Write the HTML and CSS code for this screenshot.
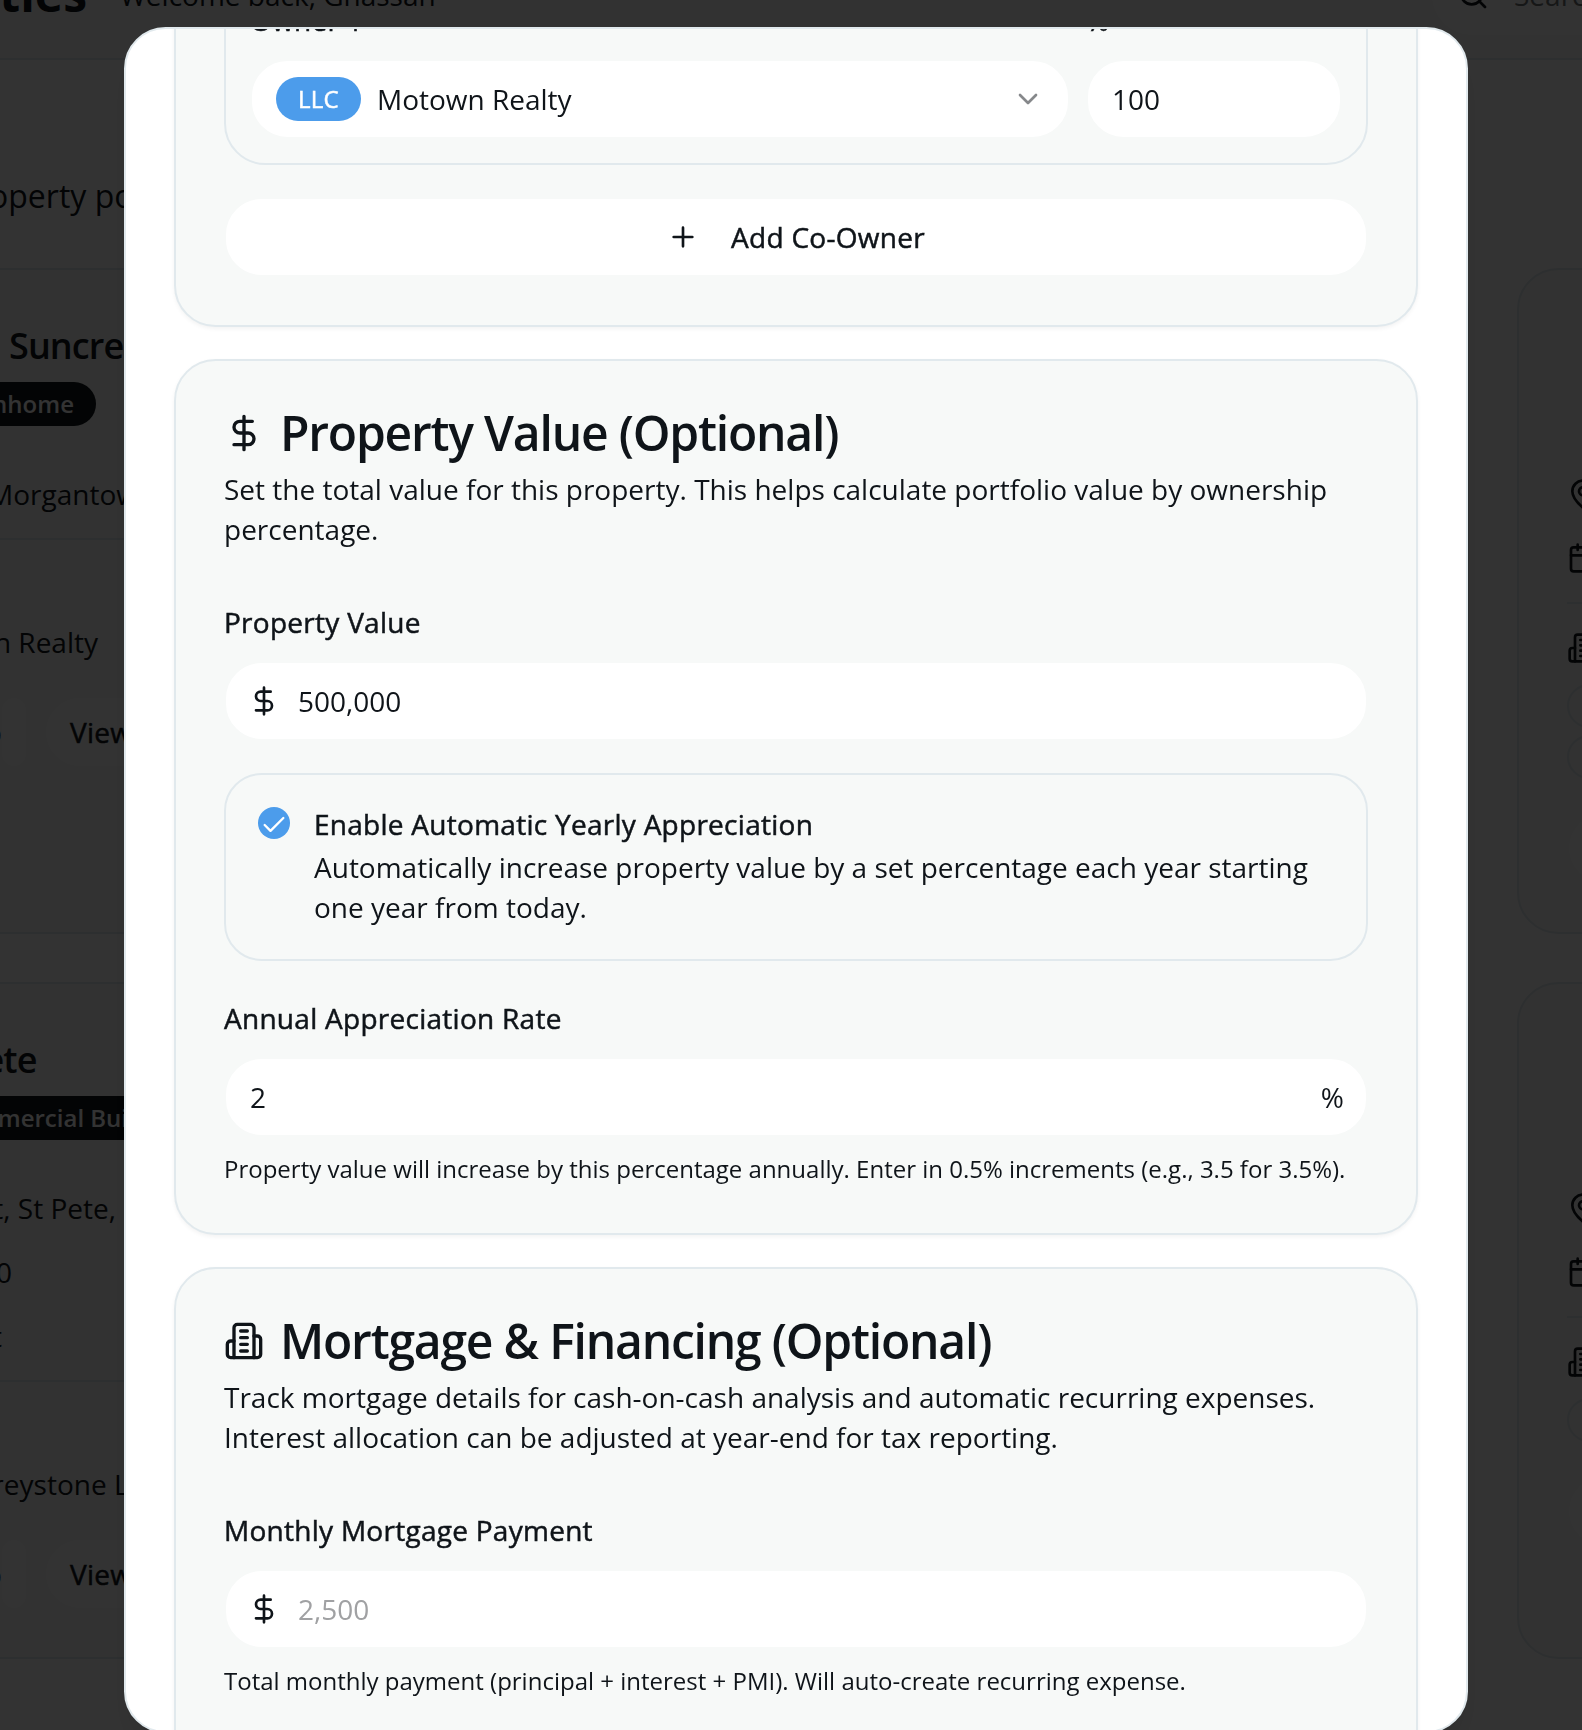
FILE: index.html
```html
<!DOCTYPE html>
<html lang="en">
<head>
<meta charset="utf-8">
<title>Properties</title>
<link rel="stylesheet" href="styles.css">
</head>
<body>
<svg class="sprite" aria-hidden="true">
  <symbol id="i-dollar" viewBox="0 0 24 24"><path d="M12 2v20M17 5H9.5a3.5 3.5 0 0 0 0 7h5a3.5 3.5 0 0 1 0 7H6"/></symbol>
  <symbol id="i-building" viewBox="0 0 24 24"><path d="M6 22V4a2 2 0 0 1 2-2h8a2 2 0 0 1 2 2v18Z"/><path d="M6 12H4a2 2 0 0 0-2 2v6a2 2 0 0 0 2 2h2M18 9h2a2 2 0 0 1 2 2v9a2 2 0 0 1-2 2h-2M10 6h4M10 10h4M10 14h4M10 18h4"/></symbol>
  <symbol id="i-pin" viewBox="0 0 24 24"><path d="M20 10c0 4.993-5.539 10.193-7.399 11.799a1 1 0 0 1-1.202 0C9.539 20.193 4 14.993 4 10a8 8 0 0 1 16 0"/><circle cx="12" cy="10" r="3"/></symbol>
  <symbol id="i-calendar" viewBox="0 0 24 24"><path d="M8 2v4M16 2v4M3 10h18"/><rect x="3" y="4" width="18" height="18" rx="2"/></symbol>
  <symbol id="i-search" viewBox="0 0 24 24"><circle cx="11" cy="11" r="8"/><path d="m21 21-4.3-4.3"/></symbol>
  <symbol id="i-plus" viewBox="0 0 24 24"><path d="M5 12h14M12 5v14"/></symbol>
  <symbol id="i-chevron" viewBox="0 0 24 24"><path d="m6 9 6 6 6-6"/></symbol>
  <symbol id="i-check" viewBox="0 0 24 24"><path d="M20 6 9 17l-5-5"/></symbol>
</svg>

<div class="page">
  <header class="topbar">
    <div class="topbar-title">Properties</div>
    <div class="welcome">Welcome back, Ghassan</div>
    <div class="search"><svg class="icon"><use href="#i-search"/></svg><span>Search</span></div>
  </header>
  <div class="intro"><span class="to-edge">operty portfolio</span></div>
  <main class="grid">
    <article class="tile tile-left">
      <div class="tile-title">Suncrest</div>
      <div class="row badge-row w96"><span class="badge dark">Townhome</span></div>
      <div class="row city">Morgantown</div>
      <hr>
      <div class="row owner w98">Motown Realty</div>
      <div class="actions"><span class="action first">Map</span><span class="action">View</span></div>
    </article>
    <article class="tile tile-right">
      <svg class="icon pin"><use href="#i-pin"/></svg>
      <svg class="icon cal"><use href="#i-calendar"/></svg>
      <hr>
      <svg class="icon bld"><use href="#i-building"/></svg>
      <span class="outline"></span>
      <span class="outline"></span>
      <span class="blank-action"></span>
    </article>
    <article class="tile tile-left second">
      <div class="row tile-title w36">St Pete</div>
      <div class="row badge-row long"><span class="badge dark">Commercial Building</span></div>
      <div class="row line-a w114">St, St Pete,</div>
      <div class="row line-b w12">0</div>
      <div class="row line-c w1">Unit</div>
      <hr>
      <div class="row greystone">Greystone LLC</div>
      <div class="actions"><span class="action first">Map</span><span class="action">View</span></div>
    </article>
    <article class="tile tile-right second">
      <svg class="icon pin"><use href="#i-pin"/></svg>
      <svg class="icon cal"><use href="#i-calendar"/></svg>
      <hr>
      <svg class="icon bld"><use href="#i-building"/></svg>
      <span class="outline"></span>
      <span class="blank-action"></span>
    </article>
  </main>
</div>

<div class="overlay">
  <div class="modal">
    <div class="modal-body">
      <section class="card">
        <div class="owner-box">
          <div class="owner-main">
            <div class="label-row"><label>Owner 1</label></div>
            <div class="control">
              <span class="badge blue">LLC</span>
              <span class="grow">Motown Realty</span>
              <svg class="icon faded"><use href="#i-chevron"/></svg>
            </div>
          </div>
          <div class="owner-share">
            <div class="label-row"><label>%</label></div>
            <div class="control">100</div>
          </div>
        </div>
        <div class="control add"><svg class="icon"><use href="#i-plus"/></svg>Add Co-Owner</div>
      </section>

      <section class="card">
        <h2><svg class="icon big"><use href="#i-dollar"/></svg>Property Value (Optional)</h2>
        <p class="desc">Set the total value for this property. This helps calculate portfolio value by ownership percentage.</p>
        <div class="label-row"><label>Property Value</label></div>
        <div class="control money"><svg class="icon"><use href="#i-dollar"/></svg>500,000</div>
        <div class="option">
          <span class="checkbox"><svg><use href="#i-check"/></svg></span>
          <div class="option-text">
            <div class="option-title"><label>Enable Automatic Yearly Appreciation</label></div>
            <p>Automatically increase property value by a set percentage each year starting one year from today.</p>
          </div>
        </div>
        <div class="label-row"><label>Annual Appreciation Rate</label></div>
        <div class="control"><span class="grow">2</span><span class="unit">%</span></div>
        <p class="hint">Property value will increase by this percentage annually. Enter in 0.5% increments (e.g., 3.5 for 3.5%).</p>
      </section>

      <section class="card last">
        <h2><svg class="icon big"><use href="#i-building"/></svg>Mortgage &amp; Financing (Optional)</h2>
        <p class="desc">Track mortgage details for cash-on-cash analysis and automatic recurring expenses. Interest allocation can be adjusted at year-end for tax reporting.</p>
        <div class="label-row"><label>Monthly Mortgage Payment</label></div>
        <div class="control money"><svg class="icon"><use href="#i-dollar"/></svg><span class="placeholder">2,500</span></div>
        <p class="hint">Total monthly payment (principal + interest + PMI). Will auto-create recurring expense.</p>
      </section>
    </div>
  </div>
</div>
</body>
</html>
```
FILE: styles.css
```css
:root {
  --ink: #0f1419;
  --line: #e1e9ed;
  --surface: #f7f9f8;
  --blue: #4c9ceb;
  --radius: 41.6px;
  --radius-md: 37.6px;
}
* { box-sizing: border-box; margin: 0; }
html, body { height: 100%; overflow: hidden; }
body {
  background: #fff;
  color: var(--ink);
  font: 28px/40px "Open Sans", "Noto Sans", sans-serif;
}
.sprite { position: absolute; width: 0; height: 0; }
svg { fill: none; stroke: currentColor; stroke-width: 2; stroke-linecap: round; stroke-linejoin: round; }
.icon { width: 32px; height: 32px; flex: none; display: block; }
.icon.big { width: 40px; height: 40px; }

/* Medium weight: regular glyphs, slightly thickened and spaced */
label, .add, .action, .badge.blue {
  -webkit-text-stroke: .5px currentColor;
  letter-spacing: .27px;
}
.add svg { letter-spacing: 0; }

/* Page behind the dialog */
.page { height: 1730px; overflow: hidden; white-space: nowrap; }
.topbar {
  height: 104px; margin-top: -44px; display: flex; align-items: center;
  background: var(--surface); border-bottom: 2px solid var(--line);
}
.topbar-title { width: 87px; margin-top: -26px; display: flex; justify-content: flex-end; font-size: 48px; font-weight: 700; line-height: 48px; flex: none; }
.welcome { margin: -24px 0 0 33px; }
.search {
  display: flex; align-items: center; gap: 25px; width: 500px; height: 80px; flex: none;
  margin: -25px -350px 0 auto; padding-left: 25px; background: #fff; border-radius: var(--radius);
}
.search span { color: #717375; }
.intro { height: 208px; padding-top: 112px; font-size: 32px; line-height: 48px; }
.to-edge { margin-left: -11px; }
.grid { display: grid; grid-template-columns: 1569px 500px; grid-template-rows: 666px 677px; gap: 48px; margin-left: -100px; }
.tile { background: var(--surface); border: 2px solid var(--line); border-radius: var(--radius); overflow: hidden; }
.tile-left { padding: 54px 0 0 98px; }
.tile-right { padding: 208px 48px 0; }
.tile hr { height: 2px; border: 0; background: var(--line); }
.tile-title { font-size: 36px; font-weight: 600; letter-spacing: -.9px; line-height: 44px; padding-left: 9px; }
.row { display: flex; }
.w96, .w98, .w36, .w114, .w12, .w1 { justify-content: flex-end; padding-left: 0; }
.w96 { width: 96px; }
.w98 { width: 98px; }
.w36 { width: 36.5px; }
.w114 { width: 116px; }
.w12 { width: 12px; }
.w1 { width: 2px; }
.badge-row { margin-top: 14px; }
.badge { height: 44px; padding: 6px 22px; border-radius: 22px; font-size: 24px; font-weight: 600; line-height: 32px; flex: none; }
.badge.dark { background: var(--ink); color: #fff; }
.badge.blue { background: var(--blue); color: #fff; font-weight: 400; }
.city { margin: 48px 0 24px -12px; }
.owner { margin-top: 82px; }
.actions { display: flex; gap: 16px; margin-top: 34px; }
.action { height: 72px; padding: 16px 24px; border: 2px solid var(--surface); border-radius: var(--radius-md); background: #fff; line-height: 36px; width: 200px; }
.action.first { width: 28px; display: flex; justify-content: flex-end; padding-left: 0; }
.long { margin-left: -77px; }
.line-a { margin-top: 48px; }
.line-b, .line-c { margin-top: 24px; }
.tile-left.second hr { margin-top: 24px; }
.greystone { margin: 82px 0 0 -28px; }
.cal { margin-top: 32px; }
.tile-right hr { margin: 28px 0; }
.outline { display: block; width: 200px; height: 44px; border: 2px solid var(--line); border-radius: 22px; margin-top: 7px; }
.bld + .outline { margin-top: 20px; }
.blank-action { display: block; width: 300px; height: 68px; margin: 35px 0 0 2px; border-radius: var(--radius-md); background: #fff; }

/* Dialog */
.overlay { position: fixed; inset: 0; padding: 27px 0 0 124px; background: rgba(0, 0, 0, .8); }
.modal {
  width: 1344px; height: 1706px; overflow: hidden; background: #fff;
  border: 2px solid var(--line); border-radius: var(--radius);
  box-shadow: 0 20px 30px -6px rgba(0, 0, 0, .1), 0 8px 12px -8px rgba(0, 0, 0, .1);
}
.modal-body { display: flex; flex-direction: column; gap: 32px; margin-top: -110px; padding: 0 48px; }
.card {
  padding: 48px; background: var(--surface); border: 2px solid var(--line); border-radius: var(--radius);
  box-shadow: 0 2px 4px rgba(0, 0, 0, .05);
}
.card.last { height: 700px; }
.owner-box { display: flex; gap: 16px; padding: 24px; border: 2px solid var(--line); border-radius: var(--radius); }
.owner-main, .grow { flex: 1; }
.owner-share { width: 256px; }
.label-row { font-size: 32px; line-height: 48px; height: 48px; margin-bottom: 16px; }
label { font-size: 28px; line-height: 1; }
.control {
  display: flex; align-items: center; gap: 16px; height: 80px; padding: 0 24px;
  border: 2px solid var(--surface); border-radius: var(--radius-md); background: #fff;
}
.add { justify-content: center; gap: 32px; margin-top: 32px; }
.money { padding-left: 22px; gap: 18px; }
.faded { opacity: .5; }
.placeholder { color: #a0a1a3; }
h2 { display: flex; align-items: center; gap: 16px; font-size: 48px; line-height: 48px; font-weight: 600; letter-spacing: -1.2px; }
.desc { margin: 12px 0 48px; }
.option { display: flex; gap: 24px; padding: 32px; margin: 32px 0; border: 2px solid var(--line); border-radius: var(--radius-md); }
.checkbox { display: flex; justify-content: center; width: 32px; height: 32px; padding-top: 4px; border-radius: 50%; background: var(--blue); color: #fff; flex: none; }
.checkbox svg { width: 28px; height: 28px; }
.option-title { font-size: 32px; line-height: 32px; height: 32px; margin-bottom: 8px; }
.unit { margin-right: -2px; }
.hint { margin-top: 16px; font-size: 24px; line-height: 32px; }
```
